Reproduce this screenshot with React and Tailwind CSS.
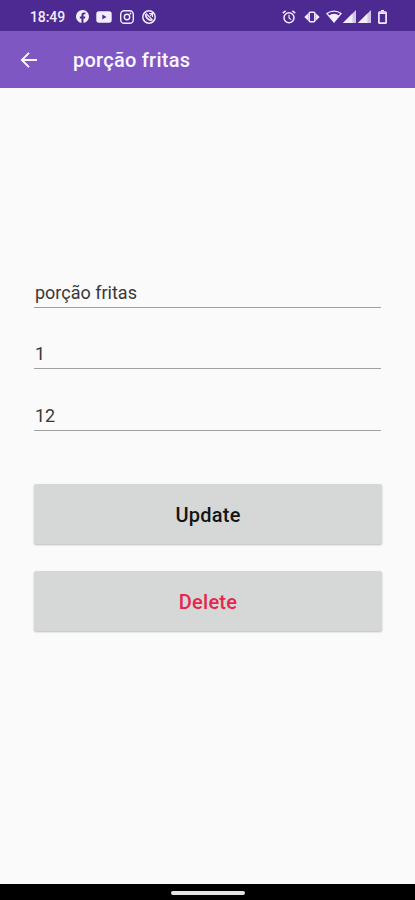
import React from 'react'

const fields = ['porção fritas', '1', '12']

const StatusBar = () => {
  return (
    <div className="h-[31px] shrink-0 bg-[#4d2a92] text-[#f3ecfb] flex items-center justify-between pl-[30px] pr-[28px] pt-[2px]">
      <div className="flex items-center">
        <span className="w-[46px] text-[14px] leading-none font-medium tracking-[-0.100px]">18:49</span>

        {/* Facebook */}
        <svg className="w-[13px] h-[13px]" viewBox="0 0 24 24" fill="currentColor">
          <path d="M24 12a12 12 0 1 0-13.900 11.900v-8.400H7.100V12h3V9.400c0-3 1.800-4.700 4.500-4.700 1.300 0 2.700.25 2.700.25v2.950h-1.500c-1.500 0-2 .95-2 1.900V12h3.350l-.55 3.500h-2.800v8.400A12 12 0 0 0 24 12z" />
        </svg>

        {/* YouTube */}
        <svg className="w-[16px] h-[12px] ml-[7px]" viewBox="0 0 16 12">
          <rect x="0.300" y="0.300" width="15.400" height="11.400" rx="2.600" fill="currentColor" />
          <path d="M6.300 3.500v5l4.200-2.500z" fill="#4d2a92" />
        </svg>

        {/* Instagram */}
        <svg className="w-[14px] h-[14px] ml-[8px]" viewBox="0 0 14 14" fill="none" stroke="currentColor" strokeWidth="1.400">
          <rect x="0.700" y="0.700" width="12.600" height="12.600" rx="3.600" />
          <circle cx="7" cy="7" r="2.700" />
          <circle cx="10.500" cy="3.500" r="0.900" fill="currentColor" stroke="none" />
        </svg>

        {/* Struck-out phone */}
        <svg className="w-[14px] h-[14px] ml-[8px]" viewBox="0 0 14 14" fill="none" stroke="currentColor" strokeWidth="1.500">
          <circle cx="7" cy="7" r="6.200" />
          <path d="M3.600 4.200c0 3.300 2.900 6.200 6.200 6.200" strokeWidth="1.800" />
          <path d="M4 3.400l6.600 6.800" strokeWidth="1.300" />
          <path d="M7 3.500h3.500V7M10.300 3.700L8 6" strokeWidth="1.100" />
        </svg>
      </div>

      <div className="flex items-center">
        {/* Alarm */}
        <svg className="w-[14px] h-[14px]" viewBox="0 0 14 14" fill="none" stroke="currentColor" strokeWidth="1.500">
          <circle cx="7" cy="7.800" r="5" />
          <path d="M0.800 3.200L3.600 0.900M13.200 3.200L10.400 0.900" />
          <path d="M7 4.800v3.100l2.200 1.700" strokeWidth="1.200" />
        </svg>

        {/* Vibrate */}
        <svg className="w-[16px] h-[12px] ml-[8px]" viewBox="0 0 16 12" fill="currentColor">
          <path d="M4.500 2v8L0.300 6zM11.500 2v8l4.200-4z" />
          <rect x="5.200" y="1.200" width="5.600" height="9.600" rx="1" fill="none" stroke="currentColor" strokeWidth="1.500" />
        </svg>

        {/* Wifi */}
        <svg className="w-[16px] h-[13px] ml-[6px]" viewBox="0 0 16 13">
          <path d="M0.900 3.500a11.500 11.500 0 0 1 14.200 0L8 12z" fill="none" stroke="currentColor" strokeWidth="1.200" />
          <path d="M2.900 5.600a8 8 0 0 1 10.200 0L8 12.500z" fill="currentColor" />
        </svg>

        {/* Signal, one per SIM */}
        <svg className="w-[13px] h-[13px] ml-px" viewBox="0 0 13 13" fill="currentColor">
          <path d="M0 13L13 0v13z" opacity="0.800" />
          <path d="M0 13L9.500 3.500V13z" />
        </svg>
        <svg className="w-[13px] h-[13px] ml-[2px]" viewBox="0 0 13 13" fill="currentColor">
          <path d="M0 13L13 0v13z" opacity="0.800" />
          <path d="M0 13L9.500 3.500V13z" />
        </svg>

        {/* Battery */}
        <svg className="w-[9px] h-[14px] ml-[7px]" viewBox="0 0 9 14">
          <path d="M3 0h3v1.500H3z" fill="currentColor" />
          <rect x="0.900" y="2" width="7.200" height="11.200" rx="0.800" fill="none" stroke="currentColor" strokeWidth="1.700" />
          <path d="M1.500 2.500h6v1.500h-6z" fill="currentColor" />
        </svg>
      </div>
    </div>
  )
}

const App = () => {
  return (
    <div className="w-full h-[900px] flex flex-col bg-[#fafafa] overflow-hidden font-['Roboto',sans-serif]">
      <StatusBar />

      {/* App bar */}
      <header className="h-[57px] shrink-0 bg-[#7e57c2] text-[#faf6ff] flex items-center pl-[20px] pt-px">
        <svg className="w-[18px] h-[18px]" viewBox="0 0 18 18" fill="none" stroke="currentColor" strokeWidth="1.900">
          <path d="M17 9H2M9 1.800L1.900 9 9 16.200" />
        </svg>
        <h1 className="ml-[35px] text-[20px] leading-6 font-medium tracking-[0.250px]">porção fritas</h1>
      </header>

      {/* Form */}
      <main className="flex-1 pt-[180px] pl-[34px] pr-[33px]">
        {fields.map((value) => (
          <div
            key={value}
            className="h-[40px] mb-[21.400px] mr-px pl-px flex items-end pb-[2px] border-b border-[#a0a0a0] text-[18px] leading-6 text-[#383838]"
          >
            {value}
          </div>
        ))}

        <button className="block w-full h-[60px] mt-[53.500px] pt-[2px] rounded-[2px] bg-[#d6d8d7] shadow-[0_1px_2px_rgba(0,0,0,0.250)] text-[20px] font-medium tracking-[0.250px] text-[#141414]">
          Update
        </button>
        <button className="block w-full h-[60px] mt-[27px] pt-[2px] rounded-[2px] bg-[#d6d8d7] shadow-[0_1px_2px_rgba(0,0,0,0.250)] text-[20px] font-medium tracking-[0.250px] text-[#e5264d]">
          Delete
        </button>
      </main>

      {/* Gesture bar */}
      <div className="h-[16px] shrink-0 bg-black flex justify-center pt-[7px]">
        <div className="w-[74px] h-[4px] rounded-full bg-[#e4e4e4]" />
      </div>
    </div>
  )
}

export default App
